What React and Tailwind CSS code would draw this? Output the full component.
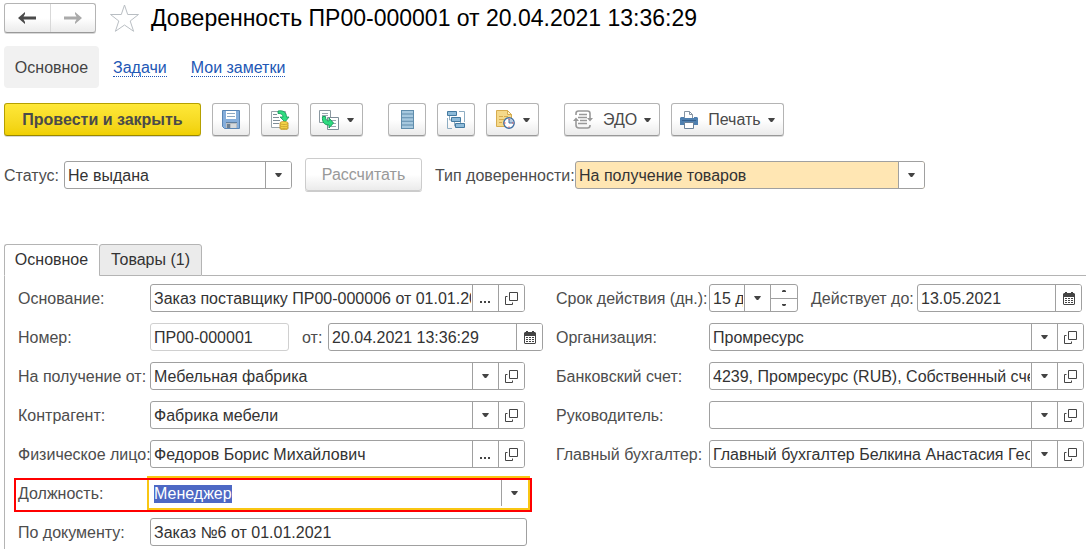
import React, { useEffect, useRef } from 'react';

const Arrow = () => (
  <svg width="7" height="4" viewBox="0 0 7 4" className="shrink-0 fill-[#444]" aria-hidden="true">
    <path d="M.3 0h6.400v.8L4.200 4H2.800L.3 .8z" />
  </svg>
);

const OpenIcon = () => (
  <svg width="13" height="13" viewBox="0 0 13 13" fill="none" className="stroke-[#444]" aria-hidden="true">
    <path d="M4.500 .5h8v8h-8zM2.500 4.500h-2v8h7v-2" />
  </svg>
);

const CalendarIcon = () => (
  <svg width="12" height="13" viewBox="0 0 12 13" aria-hidden="true">
    <path d="M1 1h1V0h2v1h4V0h2v1h1l1 1v10l-1 1H1l-1-1V2z" fill="#444" />
    <path d="M1 5h10v7H1z" fill="#fff" />
    <path d="M2 6h2v1H2zM5 6h2v1H5zM8 6h2v1H8zM2 8h2v1H2zM5 8h2v1H5zM8 8h2v1H8zM2 10h2v1H2zM5 10h2v1H5zM8 10h2v1H8z" fill="#444" />
  </svg>
);

const DotsIcon = () => (
  <svg width="11" height="14" viewBox="0 0 11 14" className="fill-[#444]" aria-hidden="true">
    <path d="M0 10h2v2H0zM4 10h2v2H4zM8 10h2v2H8z" />
  </svg>
);

const SaveIcon = () => (
  <svg width="18" height="19" viewBox="0 0 18 19" aria-hidden="true">
    <path d="M.5 .5h17v18h-15l-2-2z" fill="#86aedb" stroke="#5a86b5" />
    <path d="M4 1h10v8H4z" fill="#fff" />
    <path d="M5 3.500h8M5 6.500h8" stroke="#8fa9c2" />
    <path d="M4 12h11v6H4z" fill="#b9bec3" />
    <path d="M4 12h11v1H4z" fill="#5f7f9f" />
    <path d="M5 14h3v4H5z" fill="#6c7f92" />
    <path d="M9 14h5v4H9z" fill="#d5d9dc" />
  </svg>
);

const PostIcon = () => (
  <svg width="20" height="20" viewBox="0 0 20 20" aria-hidden="true">
    <path d="M1.500 1.500h14v16h-14z" fill="#fff" stroke="#9aa5ac" />
    <path d="M3 4.500h4M3 7.500h6M3 10.500h7M3 13.500h6" stroke="#7e8d97" />
    <path d="M8 1c5-1 8.500 1 8.500 6H19l-4 5-5-5h3c0-2-2-4-5-3.500z" fill="#2fdc80" stroke="#119455" strokeWidth=".8" />
    <path d="M10 13c0-2 8-2 8 0v5.500c0 1.700-8 1.700-8 0z" fill="#f5d447" stroke="#bf932b" strokeWidth=".8" />
    <path d="M10 13.300c0 1.600 8 1.600 8 0M10 15.500c0 1.600 8 1.600 8 0M10 17.500c0 1.500 8 1.500 8 0" fill="none" stroke="#bf932b" strokeWidth=".7" />
  </svg>
);

const CopyIcon = () => (
  <svg width="20" height="20" viewBox="0 0 20 20" aria-hidden="true">
    <path d="M.5 .5h11v12H.5z" fill="#fff" stroke="#8b98a0" />
    <path d="M3 3.500h6M3 5.500h6" stroke="#9aa7af" />
    <path d="M8.500 7.500h11v12h-11z" fill="#fff" stroke="#7e8d97" />
    <path d="M12 10.500h5M14 13.500h3M12 16.500h5" stroke="#9aa7af" />
    <path d="M3.500 6.500h3c0 3 1 4.500 3.500 4.500V8l4.500 5-4.500 5v-3c-5 0-7-3-6.500-8.500z" fill="#2fdc80" stroke="#119455" strokeWidth=".9" />
  </svg>
);

const ListIcon = () => (
  <svg width="13" height="19" viewBox="0 0 13 19" aria-hidden="true">
    <path d="M0 0h13v19H0z" fill="#5f8dac" />
    <path d="M1 1h11v2.600H1zM1 4.600h11v2.600H1zM1 8.200h11v2.600H1zM1 11.800h11v2.600H1zM1 15.400h11V18H1z" fill="#a6c8de" />
  </svg>
);

const StructureIcon = () => (
  <svg width="18" height="18" viewBox="0 0 18 18" aria-hidden="true">
    <path d="M.5 7v10.500H5M12 .5h5.500V11M2.500 5v4h2M13.500 9v3M7.500 11v4h2" fill="none" stroke="#8eadc2" />
    <path d="M.5 .5h9v4h-9zM4.500 6.500h9v4h-9zM8.500 12.500h9v4h-9z" fill="#8ebbd9" stroke="#447aa0" />
  </svg>
);

const ReminderIcon = () => (
  <svg width="19" height="19" viewBox="0 0 19 19" aria-hidden="true">
    <path d="M.5 .5h11l4 4v12H.5z" fill="#f5d98a" stroke="#d7ac4f" />
    <path d="M11.500 .5v4h4z" fill="#fff2c8" stroke="#d7ac4f" />
    <path d="M3 6.500h4M8 6.500h4M3 9.500h5M3 12.500h3" stroke="#d7ac4f" />
    <circle cx="13" cy="13" r="5.200" fill="#fff" stroke="#3f6fa3" strokeWidth="1.400" />
    <path d="M13 13V8.500a4.500 4.500 0 0 1 4.500 4.500z" fill="#b8cbe0" />
    <path d="M13 9v4h4" fill="none" stroke="#3f6fa3" />
    <path d="M12.500 17h1M9 12.500v1M17 12.500v1M12.500 9h1" stroke="#e33" strokeWidth="1.200" />
  </svg>
);

const EdoIcon = () => (
  <svg width="20" height="19" viewBox="0 0 20 19" fill="none" stroke="#999" strokeWidth="1.600" aria-hidden="true">
    <path d="M3 5V3.500Q3 1 5.500 1h9Q17 1 17 3.500V8M3 10v5q0 3 3 3h8.500q2.500 0 2.500-2.500V15" />
    <path d="M6 4.500h8M5 7.500h9M7 10.500h7M5 13.500h9" />
    <path d="M0 11l3-3.500L6 11zM14 8l3 3.500L20 8z" fill="#999" stroke="none" />
  </svg>
);

const PrinterIcon = () => (
  <svg width="18" height="18" viewBox="0 0 18 18" aria-hidden="true">
    <path d="M4.500 7V.5h5l3 3V7" fill="#fff" stroke="#8795a3" />
    <path d="M9.500 .5v3h3" fill="none" stroke="#8795a3" />
    <path d="M0 7l1-1h3v1h10V6h3l1 1v7H0z" fill="#4f80b0" />
    <path d="M2 9h14v1H2z" fill="#345f8c" />
    <path d="M4.500 11.500h9v6h-9z" fill="#fff" stroke="#6c8299" />
  </svg>
);

const toolButton =
  'flex h-[33px] items-center justify-center rounded-[3px] border border-[#b4b4b4] border-b-[#999] bg-linear-to-b from-white from-50% to-[#ebebeb] text-[#4a4a4a] shadow-[0_1px_0_#d8d8d8]';

const ToolButton = ({ label, icon, text, menu }) => (
  <button
    type="button"
    aria-label={label}
    className={`${toolButton} ${text ? 'px-2' : menu ? 'w-[53px]' : 'w-[38px]'}`}
  >
    {icon}
    {text && <span className="ml-2.5 mr-[7px]">{text}</span>}
    {menu && <span className={text ? '' : 'ml-2'}><Arrow /></span>}
  </button>
);

const box = 'flex h-7 min-w-0 overflow-hidden rounded-[3px] border border-[#a0a0a0] bg-white';
const cell = 'flex w-[26px] shrink-0 items-center justify-center border-l border-[#a0a0a0] bg-white';
const input = 'w-full min-w-0 flex-1 bg-transparent pl-[3px] pr-px pt-0.5 text-[#333] outline-none';

const actions = {
  list: { label: 'Выбрать из списка', icon: <Arrow /> },
  pick: { label: 'Выбрать', icon: <DotsIcon /> },
  open: { label: 'Открыть', icon: <OpenIcon /> },
  date: { label: 'Календарь', icon: <CalendarIcon /> }
};

const Field = ({ id, value, buttons = [], className = 'flex-1', children }) => (
  <div className={`${box} ${className}`}>
    <input id={id} type="text" defaultValue={value} className={input} />
    {buttons.map(b => (
      <button key={b} type="button" aria-label={actions[b].label} className={cell}>
        {actions[b].icon}
      </button>
    ))}
    {children}
  </div>
);

const SelectField = ({ id, options, className, fill = 'bg-white' }) => (
  <div className={`grid h-7 overflow-hidden rounded-[3px] border border-[#a0a0a0] ${fill} ${className}`}>
    <select id={id} className="col-start-1 row-start-1 w-full appearance-none bg-transparent pl-[3px] pr-7 pt-0.5 text-[#333] outline-none">
      {options.map(o => <option key={o}>{o}</option>)}
    </select>
    <span className={`${cell} pointer-events-none col-start-1 row-start-1 justify-self-end`}>
      <Arrow />
    </span>
  </div>
);

const Label = ({ id, className = '', children }) => (
  <label htmlFor={id} className={`shrink-0 whitespace-nowrap pt-0.5 ${className}`}>{children}</label>
);

const partyRows = [
  { id: 'receiveFrom', label: 'На получение от:', value: 'Мебельная фабрика', buttons: ['list', 'open'] },
  { id: 'partner', label: 'Контрагент:', value: 'Фабрика мебели', buttons: ['list', 'open'] },
  { id: 'person', label: 'Физическое лицо:', value: 'Федоров Борис Михайлович', buttons: ['pick', 'open'] }
];

const rightRows = [
  { id: 'org', label: 'Организация:', value: 'Промресурс' },
  { id: 'account', label: 'Банковский счет:', value: '4239, Промресурс (RUB), Собственный счет' },
  { id: 'head', label: 'Руководитель:', value: '' },
  { id: 'accountant', label: 'Главный бухгалтер:', value: 'Главный бухгалтер Белкина Анастасия Георгиевна' }
];

const App = () => {
  const positionRef = useRef(null);

  useEffect(() => {
    positionRef.current.focus();
    positionRef.current.select();
  }, []);

  return (
    <div className="flex min-h-screen flex-col bg-white pl-1 pt-[3px] font-['Liberation_Sans',Arial,sans-serif] text-base leading-[18px] text-[#4d4d4d]">
      <header className="flex items-center">
        <div className="flex h-[30px] w-[92px] rounded-[3px] border border-[#b4b4b4] border-b-[#999] bg-linear-to-b from-white from-50% to-[#ebebeb] shadow-[0_1px_0_#d8d8d8]">
          <button type="button" aria-label="Назад" className="flex flex-1 items-center justify-center border-r border-[#d8d8d8]">
            <svg width="18" height="12" viewBox="0 0 18 12" fill="#4a4a4a"><path d="M0 6l7-6v2L5.500 4.500H18v3H5.500L7 10v2z" /></svg>
          </button>
          <button type="button" aria-label="Вперед" className="flex flex-1 items-center justify-center">
            <svg width="18" height="12" viewBox="0 0 18 12" fill="#aaa"><path d="M18 6l-7-6v2l1.500 2.500H0v3h12.500L11 10v2z" /></svg>
          </button>
        </div>
        <button type="button" aria-label="Добавить в избранное" className="ml-3.5">
          <svg width="29" height="28" viewBox="0 0 29 28" fill="#fff" stroke="#b9bec3">
            <path d="M14.500 1l3.200 9.500h10.800l-8.300 6.500 3.400 10.300-9.100-6.300-9.100 6.300L8.800 17 .5 10.500h10.800z" />
          </svg>
        </button>
        <h1 className="ml-3 text-[23px] leading-[30px] text-black">Доверенность ПР00-000001 от 20.04.2021 13:36:29</h1>
      </header>

      <nav className="mt-[13px] flex h-[42px] items-center">
        <span className="flex h-full w-[95px] items-center justify-center rounded-[4px] bg-[#f1f1f1] pt-0.5 text-[#444]">Основное</span>
        <a href="#tasks" className="ml-3.5 mt-0.5 border-b border-dotted border-[#2257b5] leading-4 text-[#2257b5]">Задачи</a>
        <a href="#notes" className="ml-6 mt-0.5 border-b border-dotted border-[#2257b5] leading-4 text-[#2257b5]">Мои заметки</a>
      </nav>

      <div className="mt-[15px] flex gap-[11px]">
        <button
          type="button"
          className="h-[33px] w-[197px] rounded-[3px] border border-[#b5a000] border-b-[#998700] bg-linear-to-b from-[#ffe838] to-[#f0d000] font-bold text-[#4a4a4a] shadow-[0_1px_0_#d8d8d8]"
        >
          Провести и закрыть
        </button>
        <ToolButton label="Записать" icon={<SaveIcon />} />
        <ToolButton label="Провести" icon={<PostIcon />} />
        <ToolButton label="Создать на основании" icon={<CopyIcon />} menu />
        <div className="ml-3.5 flex gap-[11px]">
          <ToolButton label="Список" icon={<ListIcon />} />
          <ToolButton label="Структура подчиненности" icon={<StructureIcon />} />
          <ToolButton label="Напоминание" icon={<ReminderIcon />} menu />
        </div>
        <div className="ml-3.5 flex gap-[11px]">
          <ToolButton icon={<EdoIcon />} text="ЭДО" menu />
          <ToolButton icon={<PrinterIcon />} text="Печать" menu />
        </div>
      </div>

      <div className="mt-[22px] flex items-center">
        <Label id="status" className="w-[60px]">Статус:</Label>
        <SelectField id="status" options={['Не выдана', 'Выдана']} className="w-[228px]" />
        <button
          type="button"
          disabled
          className="ml-[13px] h-[33px] w-[117px] rounded-[3px] border border-[#ccc] bg-linear-to-b from-white from-50% to-[#ebebeb] text-[#999] shadow-[0_1px_0_#ccc]"
        >
          Рассчитать
        </button>
        <Label id="kind" className="ml-[13px] w-[140px]">Тип доверенности:</Label>
        <SelectField id="kind" options={['На получение товаров', 'На получение материалов']} className="w-[350px]" fill="bg-[#ffe6b3]" />
      </div>

      <div role="tablist" className="mt-[53px] flex h-8 text-[#333]">
        <button type="button" role="tab" aria-selected="true" className="w-[95px] rounded-t-[3px] border-x border-t border-b border-[#b4b4b4] border-b-white border-r-white">
          Основное
        </button>
        <button type="button" role="tab" aria-selected="false" className="w-[103px] rounded-t-[3px] border border-[#b4b4b4] bg-[#ebebeb]">
          Товары (1)
        </button>
        <span className="flex-1 border-b border-[#b4b4b4]" />
      </div>

      <form className="grid flex-1 grid-cols-[525fr_528fr] items-start gap-x-[13px] border-l border-[#b4b4b4] pb-[3px] pl-[13px] pr-0.5 pt-2">
        <div className="flex min-w-0 flex-col gap-[11px]">
          <div className="flex items-center pr-[18px]">
            <Label id="base" className="w-[132px]">Основание:</Label>
            <Field id="base" value="Заказ поставщику ПР00-000006 от 01.01.2021" buttons={['pick', 'open']} />
          </div>
          <div className="flex items-center">
            <Label id="number" className="w-[132px]">Номер:</Label>
            <input
              id="number"
              type="text"
              readOnly
              value="ПР00-000001"
              className="h-7 w-[139px] rounded-[3px] border border-[#d0d0d0] px-[3px] pt-0.5 text-[#333]"
            />
            <Label id="date" className="ml-[13px] w-[26px]">от:</Label>
            <Field id="date" value="20.04.2021 13:36:29" buttons={['date']} />
          </div>
          {partyRows.map(r => (
            <div key={r.id} className="flex items-center pr-[18px]">
              <Label id={r.id} className="w-[132px]">{r.label}</Label>
              <Field id={r.id} value={r.value} buttons={r.buttons} />
            </div>
          ))}
          <div className="relative flex items-center pr-4">
            <Label id="position" className="w-[132px]">Должность:</Label>
            <div className="flex h-7 min-w-0 flex-1 bg-white py-px outline-2 outline-offset-1 outline-[#f9c613]">
              <input
                id="position"
                ref={positionRef}
                type="text"
                defaultValue="Менеджер"
                className="w-full min-w-0 flex-1 bg-transparent pl-1 pt-0.5 text-[#333] outline-none selection:bg-[#4d68c4] selection:text-white"
              />
              <button type="button" aria-label="Выбрать из списка" className={cell}><Arrow /></button>
            </div>
            {/* рамка вокруг строки с должностью */}
            <div className="pointer-events-none absolute -bottom-[5px] -left-1 -top-px right-[11px] border-2 border-[#f00]" />
          </div>
          <div className="flex items-center pr-4">
            <Label id="document" className="w-[132px]">По документу:</Label>
            <Field id="document" value="Заказ №6 от 01.01.2021" />
          </div>
        </div>

        <div className="flex min-w-0 flex-col gap-[11px]">
          <div className="flex items-center pr-0.5">
            <Label id="term" className="w-[153px]">Срок действия (дн.):</Label>
            <Field id="term" value="15 дн." buttons={['list']} className="w-[89px]">
              <div className="flex w-[27px] shrink-0 flex-col border-l border-[#a0a0a0]">
                <button type="button" aria-label="Увеличить" className="flex flex-1 items-center justify-center border-b border-[#a0a0a0]">
                  <svg width="4" height="2" viewBox="0 0 4 2" fill="#444"><path d="M0 2V1l1-1h2l1 1v1z" /></svg>
                </button>
                <button type="button" aria-label="Уменьшить" className="flex flex-1 items-center justify-center">
                  <svg width="4" height="2" viewBox="0 0 4 2" fill="#444"><path d="M0 0v1l1 1h2l1-1V0z" /></svg>
                </button>
              </div>
            </Field>
            <Label id="until" className="ml-[13px] w-[106px]">Действует до:</Label>
            <Field id="until" value="13.05.2021" buttons={['date']} />
          </div>
          {rightRows.map(r => (
            <div key={r.id} className="flex items-center">
              <Label id={r.id} className="w-[153px]">{r.label}</Label>
              <Field id={r.id} value={r.value} buttons={['list', 'open']} />
            </div>
          ))}
        </div>
      </form>
    </div>
  );
};

export default App;
